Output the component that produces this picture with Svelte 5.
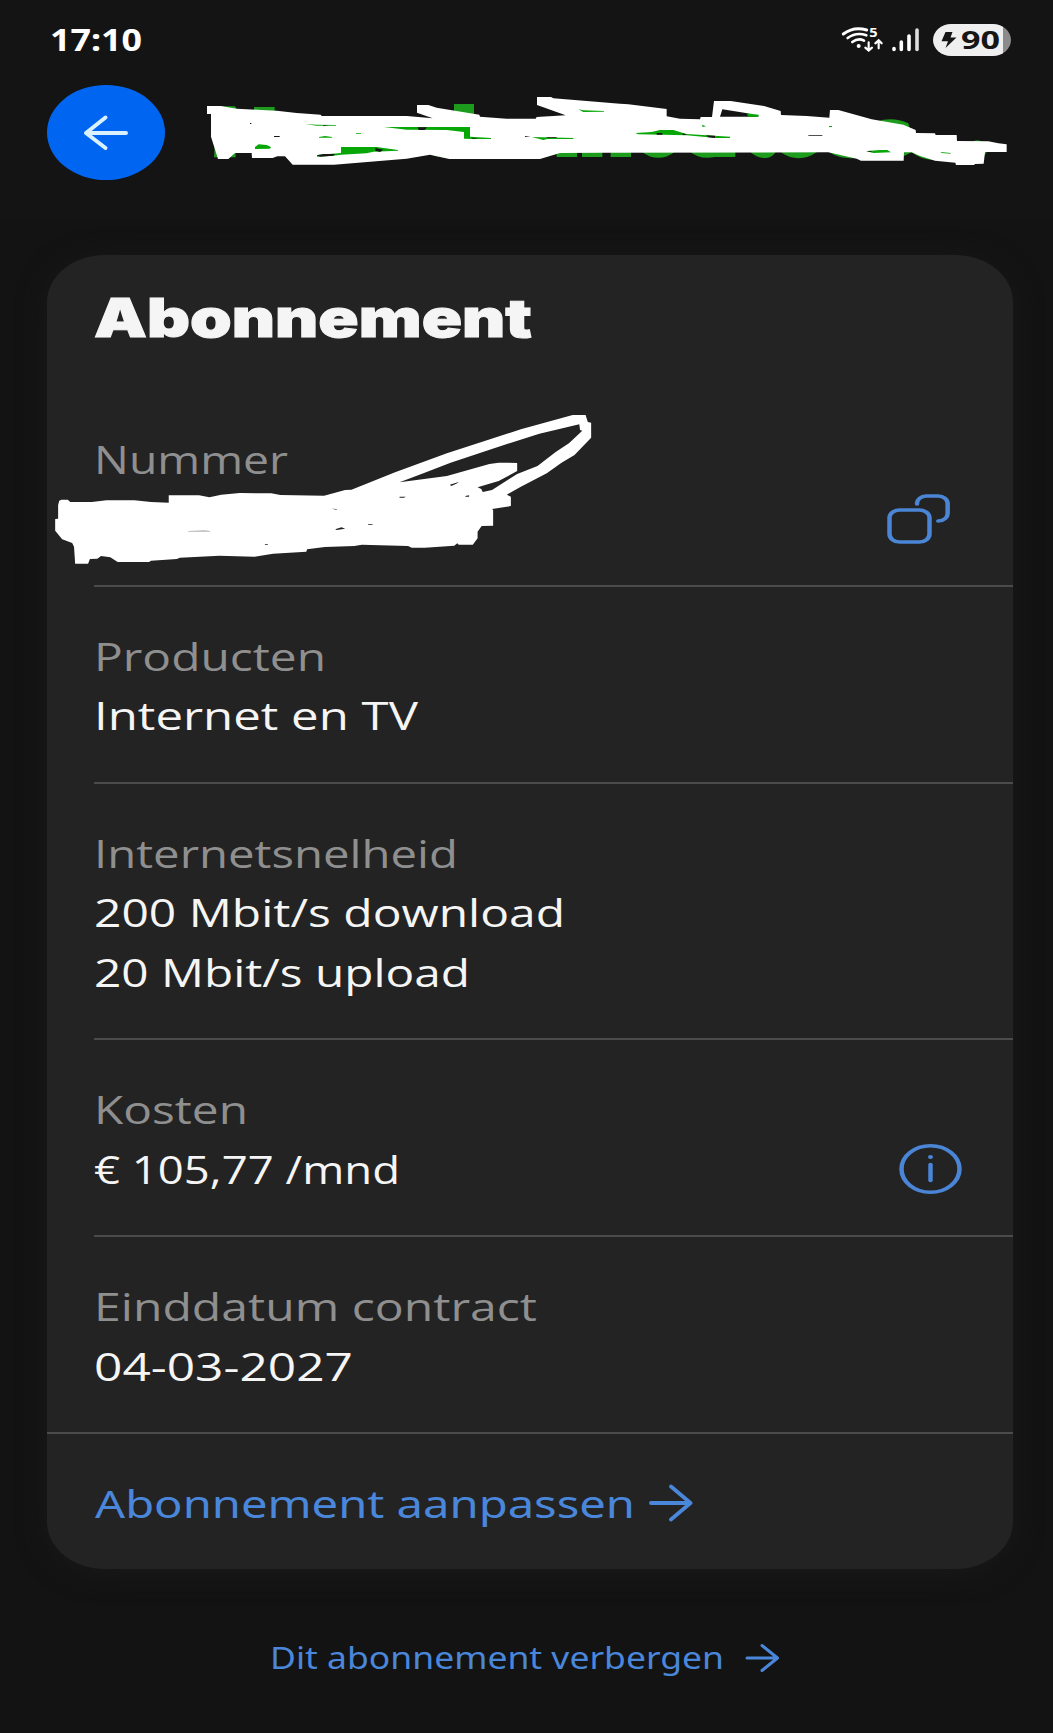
<script lang="ts">
	// Types/constants
	type Line = {
		text: string
		width: number
	}

	type Row = {
		label: Line
		values: Line[]
		icon?: 'copy' | 'info'
	}

	const rows: Row[] = [
		{
			label: { text: 'Nummer', width: 194 },
			values: [],
			icon: 'copy',
		},
		{
			label: { text: 'Producten', width: 232 },
			values: [{ text: 'Internet en TV', width: 324 }],
		},
		{
			label: { text: 'Internetsnelheid', width: 364 },
			values: [
				{ text: '200 Mbit/s download', width: 471 },
				{ text: '20 Mbit/s upload', width: 376 },
			],
		},
		{
			label: { text: 'Kosten', width: 154 },
			values: [{ text: '€ 105,77 /mnd', width: 306 }],
			icon: 'info',
		},
		{
			label: { text: 'Einddatum contract', width: 443 },
			values: [{ text: '04-03-2027', width: 259 }],
		},
	]
</script>


{#snippet wideText(text: string, width: number, height: number, baseline: number)}
	<svg class="wide-text" {width} {height}>
		<text x="0" y={baseline} textLength={width} lengthAdjust="spacingAndGlyphs">{text}</text>
	</svg>
{/snippet}

<div class="screen">
	<div class="status">
		<div class="time">{@render wideText('17:10', 92, 32, 27)}</div>

		<div class="indicators">
			<!-- Wi-Fi -->
			<svg class="wifi" width="42" height="28" viewBox="62 82 126 84" fill="none" stroke="#fff" stroke-linecap="round">
				<path d="M69 106Q101 82 139 94" stroke-width="9" />
				<path d="M82 118Q108 99 138 110" stroke-width="8" />
				<path d="M96 130Q114 117 131 126" stroke-width="8" />
				<circle cx="115" cy="142" r="6" fill="#fff" stroke="none" />
				<path d="M145 131V155M135 147L145 156L155 147M175 149V127M165 134L175 125L184 134" stroke-width="6.5" />
				<text x="147" y="116" font-size="35" font-weight="700" fill="#fff" stroke="none" textLength="25" lengthAdjust="spacingAndGlyphs">5</text>
			</svg>

			<!-- Signal -->
			<svg width="28" height="24" viewBox="0 0 28 24" stroke="#fff" stroke-width="3.6" stroke-linecap="round">
				<path d="M3 20.5V21.5M10.3 14V21.5M18 8V21.5" />
				<path d="M26 2V21.5" stroke="#ddd" />
			</svg>

			<div class="battery">
				<svg width="16" height="18" viewBox="0 0 16 18">
					<path d="M4.5 1H11.5L9.5 6.5H15.5L4.5 17L7 10.3H.5Z" fill="#161616" />
				</svg>
				{@render wideText('90', 39, 26, 22)}
			</div>
		</div>
	</div>

	<header>
		<button type="button" class="back" aria-label="Terug">
			<svg width="46" height="38" viewBox="0 0 46 38" fill="none" stroke="#d9f1ff" stroke-width="4" stroke-linecap="round" stroke-linejoin="round">
				<path d="M43 19H3M22.5 3.5L3 19L22.5 34" />
			</svg>
		</button>

		<svg class="name" width="840" height="110" viewBox="0 0 2520 330">
			<g fill="#1d9b1d">
				<path d="M84 79H135L145 95H84ZM192 81H254V100H192ZM792 72H852V108H792ZM74 200L86 232H72ZM122 217H137V232H120ZM720 222L778 236L735 228Z" />
				<path d="M1100 215H1161V231H1100ZM1176 215H1237V231H1176ZM1262 215H1323V231H1262ZM1355 215H1455Q1405 252 1355 215ZM1500 215H1636V231H1575Q1530 240 1500 215ZM1680 215H1758Q1745 234 1725 234Q1700 234 1680 215ZM1770 215H1882Q1826 254 1770 215ZM1915 215L2000 233Q1955 240 1915 215ZM2060 125Q2107 108 2155 130L2160 150ZM2140 215H2200L2230 240Q2190 238 2165 217L2142 228ZM2345 186Q2362 175 2378 186ZM2366 214H2392L2380 232Z" />
			</g>
			<path
				fill="#fff"
				fill-rule="evenodd"
				d="M51 78L92 78L140 86L214 90L260 92L320 99L392 104L395 108L650 108L728 115L681 98L681 75L715 75L740 83L868 104L870 110L950 116L1037 116L1040 111L1127 106L1041 75L1041 51L1083 51L1090 55L1290 71L1315 73L1430 87L1430 109L1470 116L1530 118L1532 111L1566 111L1572 63L1622 63L1722 78L1772 93L1773 105L1850 108L1918 113L1920 90L1945 90L2045 118L2140 134L2177 150L2178 159L2235 160L2237 165L2300 165L2301 183L2395 184L2425 190L2450 193L2450 216L2385 216L2381 251L2355 252L2352 255L2298 255L2296 248L2235 242L2190 228L2165 217L2142 217L2141 242L2013 242L2000 236L1915 217L1230 218L1110 219L1050 237L778 237L720 224L650 236L432 254L308 254L285 229L262 229L248 234L186 234L185 219L135 219L115 237L84 237L63 170L63 102L51 102ZM1597 88L1672 100L1706 110L1590 110Z"
			/>
			<path
				fill="#07a707"
				d="M1670 100L1706 104V110H1675ZM195 201L206 193L230 195L243 201L240 206L195 207ZM345 132L380 134L438 135V137L380 137ZM387 171L405 168L426 171V173H387ZM498 159H513V161H498ZM582 141H840V170L903 174V177L850 177L822 176V156L770 150L650 149ZM453 201H560L624 210V212L550 215L530 220L453 224L430 227L381 230V225L453 219ZM1165 88L1180 91L1242 93V95L1180 96ZM1025 171L1150 174V177L1072 177L1060 180ZM1336 159L1385 156L1410 150H1450L1490 162L1620 170V174H1578L1490 166L1345 163ZM1536 134L1548 139L1538 141ZM1917 138H1926V141H1917ZM2030 213L2070 210H2092L2103 217L2050 219ZM2252 216L2282 219V221L2255 219Z"
			/>
			<path
				fill="#171717"
				d="M683 142H711L704 150H686ZM400 136H416L400 139ZM180 129H184V132H180ZM252 168H269V171H252ZM556 204L580 209L570 216L556 212ZM381 226L400 222H435L430 227L390 230ZM845 173L865 176H848ZM1005 168L1022 171H1005ZM1070 172H1100V174H1070ZM1400 159H1416L1418 164H1400ZM1478 160L1492 165H1478ZM1548 166L1575 167V174L1555 172ZM1855 165H1897V167H1855ZM2028 213H2044V217Z"
			/>
		</svg>
	</header>

	<main>
		<section class="card">
			<h1>{@render wideText('Abonnement', 438, 60, 46)}</h1>

			{#each rows as row}
				<div class="row">
					<div class="lines">
						<div class="label">{@render wideText(row.label.text, row.label.width, 59.5, 43)}</div>
						{#each row.values as value}
							<div class="value">{@render wideText(value.text, value.width, 59.5, 43)}</div>
						{:else}
							<div class="value hidden-value">
								<svg width="580" height="200" viewBox="0 0 1568 600" preserveAspectRatio="none">
									<path
										fill="#fff"
										fill-rule="evenodd"
										d="M52 302L58 299H75L82 306L140 306L180 301L255 301L300 306L348 308L348 286L430 286L458 292L490 284L540 279L625 280L650 285L768 287L825 270L842 269L960 217L1100 160L1300 88L1440 45L1475 45L1481 66L1490 68L1490 113L1445 165L1410 188L1370 220L1300 260L1262 284L1273 290L1273 318L1222 327L1225 330L1225 377L1194 378L1183 395L1183 415L1170 434L1132 434L1128 430L1120 437L1040 443L1005 443L995 438L870 434L850 438L770 441L722 448L720 455L630 461L580 470L485 467L378 473L370 477L300 482L295 486L210 486L190 472L165 468L155 476L135 477L130 491L95 491L92 440L87 429L60 418L41 392L41 357L49 356L49 315ZM972 247L1040 218L1110 188L1240 140L1350 101L1458 73L1460 90L1466 92L1430 130L1395 155L1345 198L1290 222L1222 270L1197 276L1193 267L1183 262L1240 243L1290 213L1290 189L1240 188L1215 192L1100 228Z"
									/>
									<path
										fill="#222"
										d="M1108 254L1132 246L1128 250L1112 258ZM972 290H989L984 293H972ZM1150 288L1160 286V290H1150ZM798 388L815 382L825 386L802 390ZM400 393L445 392L460 393V394H400ZM887 372H899V374H887ZM608 432H616V434H608ZM788 326L802 327V329Z"
									/>
								</svg>
							</div>
						{/each}
					</div>

					{#if row.icon === 'copy'}
						<button type="button" class="copy" aria-label="Kopiëren">
							<svg width="64" height="51" viewBox="0 0 51.2 51" preserveAspectRatio="none">
								<rect x="2" y="16" width="32" height="32" rx="8" />
								<path d="M24 10A7.5 7.5 0 0 1 31.5 2H41A7.5 7.5 0 0 1 48.5 9.5V19A7.5 7.5 0 0 1 41 27" />
							</svg>
						</button>
					{:else if row.icon === 'info'}
						<button type="button" class="info" aria-label="Informatie">
							<svg width="63" height="50" viewBox="0 0 50.4 50" preserveAspectRatio="none">
								<circle cx="25.2" cy="25" r="23.2" />
								<path d="M25.2 20.5V36.5" />
								<circle class="dot" cx="25.2" cy="13" r="2" />
							</svg>
						</button>
					{/if}
				</div>
			{/each}

			<a href="#aanpassen" class="change">
				{@render wideText('Abonnement aanpassen', 540, 59.5, 43)}
				<svg width="45" height="42" viewBox="0 0 45 42" class="arrow">
					<path d="M2 19H41M22 2.5L41.5 19L22 35.5" />
				</svg>
			</a>
		</section>

		<a href="#verbergen" class="hide">
			{@render wideText('Dit abonnement verbergen', 454, 44, 32)}
			<svg width="36" height="32" viewBox="0 0 36 32" class="arrow small">
				<path d="M2 15H32M17 2.5L32.5 15L17 27.5" />
			</svg>
		</a>
	</main>
</div>


<style>
	:global(body) {
		background: #131313;
	}

	.screen {
		box-sizing: border-box;
		width: 1053px;
		height: 1733px;
		overflow: hidden;
		background: #131313;
		font-family: "Noto Sans", "Open Sans", sans-serif;
	}

	svg {
		display: block;
		flex: none;
	}

	.wide-text {
		overflow: visible;
		fill: currentColor;
	}

	button {
		display: flex;
		align-items: center;
		justify-content: center;
		padding: 0;
		border: 0;
		background: none;
	}

	.status {
		box-sizing: border-box;
		display: flex;
		align-items: center;
		justify-content: space-between;
		height: 80px;
		padding: 0 42px 0 50px;
		background: #141414;
		color: #fff;
	}

	.time {
		font-size: 31px;
		font-weight: 700;
	}

	.indicators {
		display: flex;
		align-items: center;
	}

	.indicators > .wifi {
		overflow: visible;
	}

	.indicators > svg:nth-child(2) {
		margin: 0 14px 0 8px;
	}

	.battery {
		box-sizing: border-box;
		display: flex;
		align-items: center;
		gap: 4px;
		width: 78px;
		height: 32px;
		padding-left: 8px;
		border-radius: 18px / 16px;
		background: linear-gradient(90deg, #efefef 70px, #8b8b8b 70px);
		color: #161616;
		font-size: 25px;
		font-weight: 700;
	}

	header {
		display: flex;
		height: 140px;
		background: #141414;
	}

	.back {
		width: 118px;
		height: 95px;
		margin: 5px 25px 0 47px;
		border-radius: 50%;
		background: #0066f2;
	}

	.card {
		width: 966px;
		height: 1314px;
		margin: 35px 0 0 47px;
		overflow: hidden;
		border-radius: 58px / 47px;
		background: #232323;
		box-shadow: 0 4px 28px #191919;
	}

	h1 {
		box-sizing: border-box;
		height: 134.5px;
		margin: 0 0 0 47px;
		padding-top: 36px;
		color: #f5f5f5;
		font-family: Inter, "Noto Sans", sans-serif;
		font-size: 53px;
		font-weight: 900;
	}

	h1 :global(text) {
		stroke: #f5f5f5;
		stroke-width: 1px;
	}

	.row {
		box-sizing: border-box;
		display: flex;
		align-items: flex-end;
		justify-content: space-between;
		margin-left: 47px;
		padding: 41px 0 35px;
		border-bottom: 2px solid #4b4b4b;
		font-family: "Open Sans", "Noto Sans", sans-serif;
		font-size: 39px;
	}

	.row:nth-last-child(2) {
		margin-left: 0;
		padding-left: 47px;
	}

	.label {
		color: #8f8f8f;
	}

	.value {
		color: #f5f5f5;
	}

	.hidden-value {
		position: relative;
		height: 59.5px;
	}

	/* Marker strokes lie over the label and the card edge */
	.hidden-value svg {
		position: absolute;
		top: -90px;
		left: -54px;
	}

	.copy,
	.info {
		height: 59.5px;
		margin-right: 62px;
		fill: none;
		stroke: #4a85d6;
		stroke-width: 3.6;
		stroke-linecap: round;
	}

	.info {
		height: 61.5px;
		margin-right: 51px;
	}

	.dot {
		fill: #4a85d6;
		stroke: none;
	}

	.change {
		display: flex;
		align-items: center;
		gap: 14px;
		padding: 41px 0 0 48px;
		color: #4a87da;
		font-size: 39px;
		text-decoration: none;
	}

	.arrow {
		fill: none;
		stroke: #4a87da;
		stroke-width: 3.8;
		stroke-linecap: round;
		stroke-linejoin: round;
	}

	.arrow.small {
		stroke-width: 3;
	}

	.hide {
		display: flex;
		align-items: center;
		gap: 21px;
		margin: 68px 0 0 270px;
		color: #4a87da;
		font-size: 30px;
		text-decoration: none;
	}
</style>
